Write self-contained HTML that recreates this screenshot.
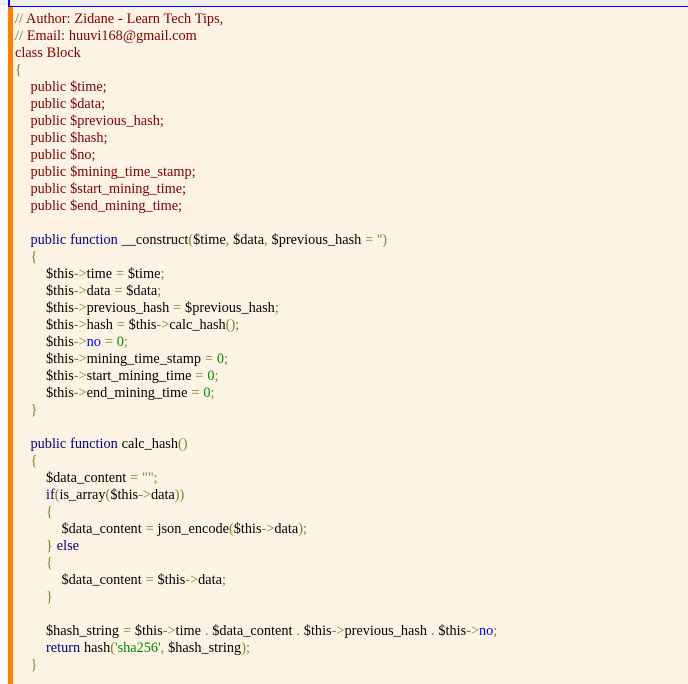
<!DOCTYPE html>
<html><head><meta charset="utf-8"><style>
body{margin:0;width:688px;height:684px;overflow:hidden;background:#fff;}
.top{position:absolute;left:0;top:0;width:688px;height:6px;background:#efefef;}
.bl{position:absolute;left:8px;top:0;width:2px;height:6px;background:#00f;}
.line{position:absolute;left:8px;top:6px;width:680px;height:1.5px;background:#00f;}
.box{position:absolute;left:8px;top:7px;width:680px;height:677px;background:#fdf3e4;border-left:5px solid #ff7f00;box-sizing:border-box;}
pre{margin:0;position:absolute;left:15px;top:11px;font-family:"Liberation Serif",serif;font-size:14.3px;line-height:17px;color:#000;white-space:pre;letter-spacing:0;word-spacing:0.3px;}
.c{color:#696969}.m{color:#800000}.k{color:#000080}.p{color:#808030}.n{color:#008c00}.b{color:#0000e6}.s{color:#008c00}
</style></head><body>
<div class="top"></div><div class="bl"></div><div class="line"></div>
<div class="box"></div>
<pre><span class="c">//</span><span class="m"> Author: Zidane - Learn Tech Tips,</span>
<span class="c">//</span><span class="m"> Email: huuvi168@gmail.com</span>
<span class="m">class Block</span>
<span class="p">{</span>
    <span class="m">public $time;</span>
    <span class="m">public $data;</span>
    <span class="m">public $previous_hash;</span>
    <span class="m">public $hash;</span>
    <span class="m">public $no;</span>
    <span class="m">public $mining_time_stamp;</span>
    <span class="m">public $start_mining_time;</span>
    <span class="m">public $end_mining_time;</span>

    <span class="k">public function</span> __construct<span class="p">(</span>$time<span class="p">,</span> $data<span class="p">,</span> $previous_hash <span class="p">= '')</span>
    <span class="p">{</span>
        $this<span class="p">-&gt;</span>time <span class="p">=</span> $time<span class="p">;</span>
        $this<span class="p">-&gt;</span>data <span class="p">=</span> $data<span class="p">;</span>
        $this<span class="p">-&gt;</span>previous_hash <span class="p">=</span> $previous_hash<span class="p">;</span>
        $this<span class="p">-&gt;</span>hash <span class="p">=</span> $this<span class="p">-&gt;</span>calc_hash<span class="p">();</span>
        $this<span class="p">-&gt;</span><span class="b">no</span> <span class="p">=</span> <span class="n">0</span><span class="p">;</span>
        $this<span class="p">-&gt;</span>mining_time_stamp <span class="p">=</span> <span class="n">0</span><span class="p">;</span>
        $this<span class="p">-&gt;</span>start_mining_time <span class="p">=</span> <span class="n">0</span><span class="p">;</span>
        $this<span class="p">-&gt;</span>end_mining_time <span class="p">=</span> <span class="n">0</span><span class="p">;</span>
    <span class="p">}</span>

    <span class="k">public function</span> calc_hash<span class="p">()</span>
    <span class="p">{</span>
        $data_content <span class="p">= "";</span>
        <span class="k">if</span><span class="p">(</span>is_array<span class="p">(</span>$this<span class="p">-&gt;</span>data<span class="p">))</span>
        <span class="p">{</span>
            $data_content <span class="p">=</span> json_encode<span class="p">(</span>$this<span class="p">-&gt;</span>data<span class="p">);</span>
        <span class="p">}</span> <span class="k">else</span>
        <span class="p">{</span>
            $data_content <span class="p">=</span> $this<span class="p">-&gt;</span>data<span class="p">;</span>
        <span class="p">}</span>

        $hash_string <span class="p">=</span> $this<span class="p">-&gt;</span>time <span class="p">.</span> $data_content <span class="p">.</span> $this<span class="p">-&gt;</span>previous_hash <span class="p">.</span> $this<span class="p">-&gt;</span><span class="b">no</span><span class="p">;</span>
        <span class="k">return</span> hash<span class="p">(</span><span class="s">'sha256'</span><span class="p">,</span> $hash_string<span class="p">);</span>
    <span class="p">}</span></pre>
</body></html>
